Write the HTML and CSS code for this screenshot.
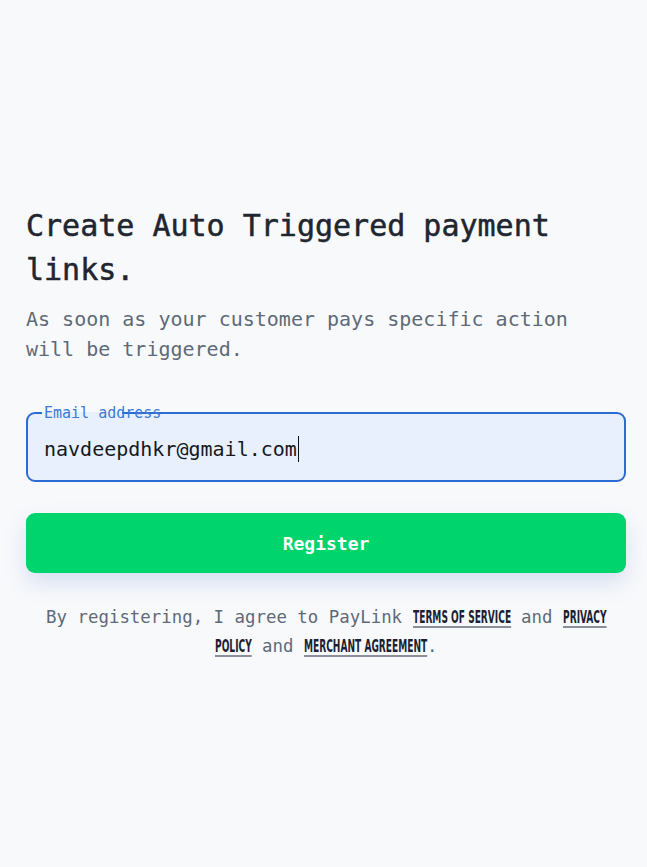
FILE: index.html
```html
<!DOCTYPE html>
<html lang="en">
<head>
<meta charset="utf-8">
<title>PayLink – Register</title>
<link rel="stylesheet" href="styles.css">
</head>
<body>
<main class="page">
  <section class="card">
    <h1 class="title">Create Auto Triggered payment links.</h1>
    <p class="subtitle">As soon as your customer pays specific action will be triggered.</p>
    <div class="field">
      <span class="notch"></span>
      <span class="label">Email address</span>
      <div class="value">navdeepdhkr@gmail.com<span class="caret"></span></div>
    </div>
    <button class="btn" type="button">Register</button>
    <p class="terms">By registering, I agree to PayLink <a class="lnk w-terms" href="#"><span>Terms of Service</span></a> and <a class="lnk w-privacy" href="#"><span>Privacy</span></a> <a class="lnk w-policy" href="#"><span>Policy</span></a> and <a class="lnk w-merchant" href="#"><span>Merchant Agreement</span></a>.</p>
  </section>
</main>
</body>
</html>
```

FILE: styles.css
```css
html, body {
  margin: 0;
  padding: 0;
  background: #f8f9fb;
}
body {
  font-family: "DejaVu Sans Mono", "Liberation Mono", monospace;
}
.page {
  padding: 204px 21px 0 26px;
}
.card {
  width: 600px;
}
.title {
  margin: 0;
  font-size: 30px;
  line-height: 44px;
  font-weight: 400;
  -webkit-text-stroke: 0.5px #1f2630;
  color: #1f2630;
}
.subtitle {
  margin: 12px 0 0;
  font-size: 20px;
  line-height: 30px;
  color: #5e6a78;
}
.field {
  position: relative;
  margin-top: 48px;
  height: 66px;
  border: 2px solid #2b6bd3;
  border-radius: 9px;
  background: #e8f0fe;
}
.notch {
  position: absolute;
  top: -2px;
  left: 14px;
  width: 80px;
  height: 2px;
  background: #e8f0fe;
}
.label {
  position: absolute;
  top: -11px;
  left: 16px;
  font-size: 15px;
  line-height: 20px;
  color: #3b7ad8;
}
.value {
  display: flex;
  align-items: center;
  height: 100%;
  box-sizing: border-box;
  padding: 4px 0 0 16px;
  font-size: 20px;
  color: #16181d;
}
.caret {
  display: inline-block;
  width: 1.5px;
  height: 26px;
  margin-left: 1px;
  background: #111;
}
.btn {
  display: block;
  width: 600px;
  height: 60px;
  margin-top: 31px;
  border: 0;
  border-radius: 9px;
  background: #00d46c;
  color: #ffffff;
  font-family: "DejaVu Sans Mono", monospace;
  font-size: 18px;
  font-weight: 700;
  box-shadow: 0 10px 22px rgba(60, 110, 200, 0.18);
  cursor: pointer;
}
.terms {
  margin: 30px 0 0;
  padding: 0 14px;
  text-align: center;
  font-size: 17.4px;
  line-height: 29px;
  color: #5e6a78;
}
.lnk {
  display: inline-block;
  white-space: nowrap;
  vertical-align: baseline;
  line-height: 18px;
  font-family: "DejaVu Sans Condensed", "Liberation Sans", sans-serif;
  font-weight: 700;
  font-size: 18px;
  text-transform: uppercase;
  color: #1d1f33;
  text-decoration: none;
}
.lnk > span {
  display: inline-block;
  transform: scaleX(0.56);
  transform-origin: left center;
  text-decoration: underline;
  text-decoration-color: #8a8f99;
  text-decoration-thickness: 1.5px;
  text-underline-offset: 3px;
}
.w-terms { width: 98px; }
.w-privacy { width: 43px; }
.w-policy { width: 37px; }
.w-merchant { width: 123px; }
```
